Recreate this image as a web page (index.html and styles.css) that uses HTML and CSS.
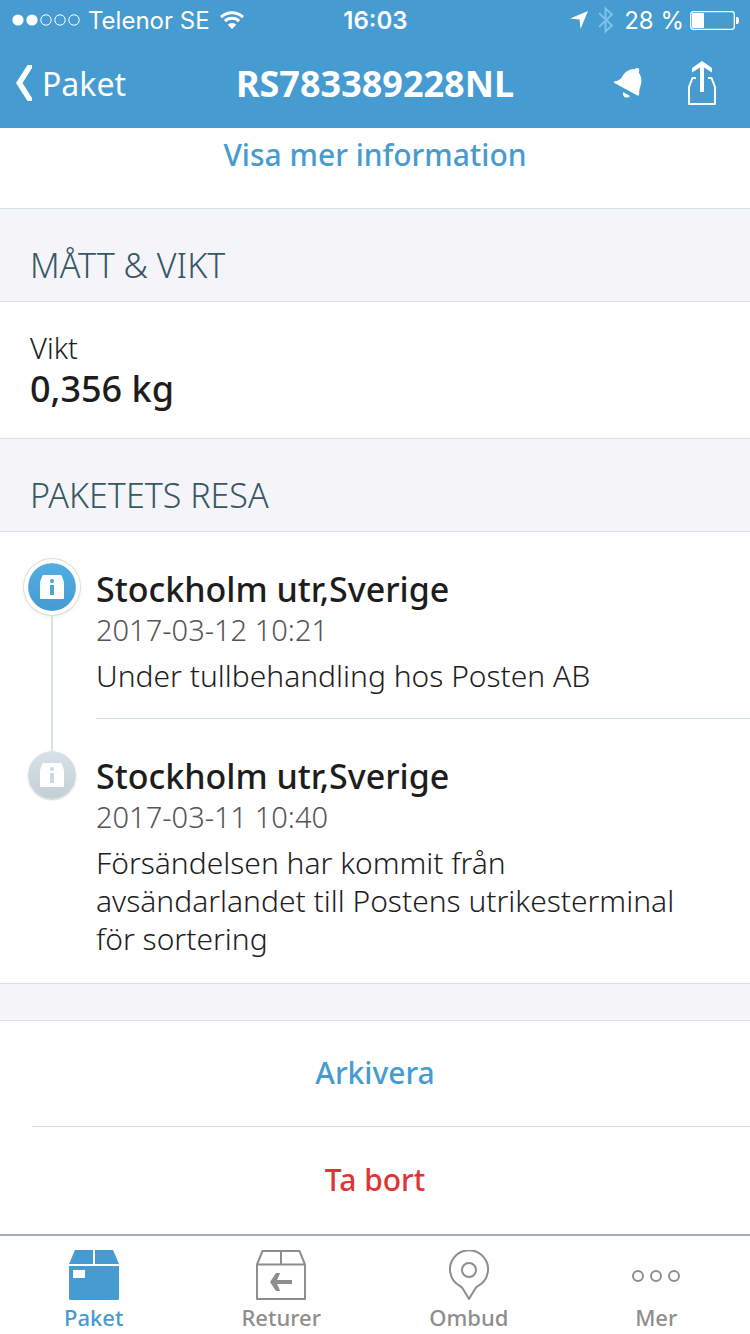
FILE: index.html
```html
<!DOCTYPE html>
<html lang="sv">
<head>
<meta charset="utf-8">
<meta name="viewport" content="width=device-width, initial-scale=1">
<title>RS783389228NL</title>
<link rel="stylesheet" href="styles.css">
</head>
<body>
<div class="app">
  <header class="top">
    <div class="status">
      <div class="status-side">
        <svg class="signal" width="68" height="12" viewBox="0 0 68 12" aria-hidden="true">
          <g fill="#fff"><circle cx="6" cy="6" r="5.6"/><circle cx="20" cy="6" r="5.6"/></g>
          <g fill="none" stroke="#fff"><circle cx="34" cy="6" r="5.2"/><circle cx="48" cy="6" r="5.2"/><circle cx="62" cy="6" r="5.2"/></g>
        </svg>
        <span>Telenor SE</span>
        <svg class="wifi" width="24" height="18" viewBox="0 0 24 18" aria-hidden="true">
          <g fill="none" stroke="#fff" stroke-width="3"><path d="M1 6.200a16 16 0 0 1 22 0"/><path d="M4.900 10.200a10.300 10.300 0 0 1 14.200 0"/></g>
          <path d="M12 18l-4.300-4.300a6.200 6.200 0 0 1 8.600 0z" fill="#fff"/>
        </svg>
      </div>
      <time class="clock">16:03</time>
      <div class="status-side status-right">
        <svg width="18" height="18" viewBox="0 0 18 18" aria-hidden="true"><path d="M18 0L10.500 18 9.500 8.500 0 7.500z" fill="#fff"/></svg>
        <svg class="bluetooth" width="16" height="28" viewBox="0 0 16 28" aria-hidden="true"><path d="M1 7l13 12.500-6.500 6V2.500l6.500 6L1 21" fill="none" stroke="#7cc3e8" stroke-width="2"/></svg>
        <span>28 %</span>
        <svg class="battery" width="49" height="19" viewBox="0 0 49 19" aria-hidden="true">
          <rect x=".7" y=".7" width="43.600" height="17.600" rx="2.500" fill="none" stroke="#fff" stroke-width="1.300"/>
          <rect x="2" y="2" width="12" height="15" rx="1" fill="#fff"/><path d="M46 6h1q2 0 2 3.500t-2 3.500h-1z" fill="#fff"/>
        </svg>
      </div>
    </div>
    <nav class="nav">
      <button class="back" type="button">
        <svg width="16" height="36" viewBox="0 0 16 36" aria-hidden="true"><path d="M11.500 0H16v3L6.500 18 16 33v3h-4.500L0 18z" fill="#fff"/></svg>
        <span>Paket</span>
      </button>
      <h1 class="title">RS783389228NL</h1>
      <div class="actions">
        <button class="icon-button" type="button" aria-label="Aviseringar">
          <svg width="28" height="30" viewBox="0 0 28 30" aria-hidden="true"><path d="M0 13.500C4 13 6.500 11.500 8 9c2.500-5 6.500-8 13-8 .5-1.300 3.500-1.300 4 0 .4 1 .3 2.500-.3 3.500C28 9 28 14 26.500 18c-1.200 3.500-1.500 6-1.200 8l-1 2L0 14.800z" fill="#fff"/><path d="M9 24l7 4c-1.500 2.500-7 2.300-7-2z" fill="#fff"/></svg>
        </button>
        <button class="icon-button" type="button" aria-label="Dela">
          <svg width="28" height="44" viewBox="0 0 28 44" aria-hidden="true"><path d="M8 17H4.500L1 26v17h26V26l-3.500-9H20" fill="none" stroke="#fff" stroke-width="2" stroke-linejoin="round"/><path d="M14 0l10 7v4.500l-8-5V31h-4V6.500l-8 5V7z" fill="#fff"/></svg>
        </button>
      </div>
    </nav>
  </header>

  <main class="content">
    <button class="action more" type="button">Visa mer information</button>

    <h2 class="group-title">MÅTT &amp; VIKT</h2>
    <dl class="weight">
      <dt>Vikt</dt>
      <dd>0,356 kg</dd>
    </dl>

    <h2 class="group-title">PAKETETS RESA</h2>
    <ol class="journey">
      <li class="event">
        <div class="marker">
          <svg class="badge badge-current" width="48" height="48" viewBox="0 0 48 48" aria-hidden="true">
            <defs><linearGradient id="blue" x2="0" y2="1"><stop stop-color="#52aee3"/><stop offset="1" stop-color="#469bd1"/></linearGradient></defs>
            <circle cx="24" cy="24" r="24" fill="url(#blue)"/>
            <path d="M15.500 12h17q1 0 1.300 1l2.200 6v16q0 1-1 1H13q-1 0-1-1V19l2.200-6q.3-1 1.300-1z" fill="#fff"/>
            <g fill="#4aa3d9"><circle cx="24" cy="18" r="2"/><path d="M22 22h4v10h-4z"/></g>
          </svg>
        </div>
        <div class="event-body">
          <h3>Stockholm utr,Sverige</h3>
          <time>2017-03-12 10:21</time>
          <p>Under tullbehandling hos Posten AB</p>
        </div>
      </li>
      <li class="event">
        <div class="marker">
          <svg class="badge badge-past" width="48" height="48" viewBox="0 0 48 48" aria-hidden="true">
            <defs><linearGradient id="grey" x2="0" y2="1"><stop stop-color="#d6e2e7"/><stop offset="1" stop-color="#c3cfd5"/></linearGradient></defs>
            <circle cx="24" cy="24" r="24" fill="url(#grey)"/>
            <path d="M15.500 12h17q1 0 1.300 1l2.200 6v16q0 1-1 1H13q-1 0-1-1V19l2.200-6q.3-1 1.300-1z" fill="#fff"/>
            <g fill="#ccd8dd"><circle cx="24" cy="18" r="2"/><path d="M22 22h4v10h-4z"/></g>
          </svg>
        </div>
        <div class="event-body">
          <h3>Stockholm utr,Sverige</h3>
          <time>2017-03-11 10:40</time>
          <p>Försändelsen har kommit från avsändarlandet till Postens utrikesterminal för sortering</p>
        </div>
      </li>
    </ol>

    <div class="actions-list">
      <button class="action" type="button">Arkivera</button>
      <button class="action danger" type="button">Ta bort</button>
    </div>
  </main>

  <nav class="tabs">
    <a class="tab active" href="#paket" aria-current="page">
      <svg width="50" height="50" viewBox="0 0 50 50" aria-hidden="true"><g fill="currentColor"><path d="M6 0h18v14H0zM26 0h18l6 14H26z"/><path d="M0 16h50v33l-1 1H1l-1-1z"/></g><path d="M4 20h12v8H4z" fill="#fff"/></svg>
      <span>Paket</span>
    </a>
    <a class="tab" href="#returer">
      <svg width="50" height="50" viewBox="0 0 50 50" aria-hidden="true"><path d="M1 14.500V49h48V14.500L43.500 1h-37L1 14.500h48M25 1v13" fill="none" stroke="currentColor" stroke-width="2" stroke-linejoin="round"/><path d="M14 32l6-9h4l-1 3-2 4h15v4H21l2 4 1 3h-4z" fill="currentColor"/></svg>
      <span>Returer</span>
    </a>
    <a class="tab" href="#ombud">
      <svg width="40" height="50" viewBox="0 0 40 50" aria-hidden="true"><g fill="none" stroke="currentColor" stroke-width="2" stroke-linejoin="round"><path d="M20 49l-6-10q-1-2-3-3a19 19 0 1 1 18 0q-2 1-3 3z"/><circle cx="20" cy="20" r="7"/></g></svg>
      <span>Ombud</span>
    </a>
    <a class="tab" href="#mer">
      <svg width="48" height="50" viewBox="0 0 48 50" aria-hidden="true"><g fill="none" stroke="currentColor" stroke-width="2"><circle cx="6" cy="26" r="5"/><circle cx="24" cy="26" r="5"/><circle cx="42" cy="26" r="5"/></g></svg>
      <span>Mer</span>
    </a>
  </nav>
</div>
</body>
</html>
```
FILE: styles.css
```css
:root {
  --blue: #469bd1;
  --line: #d7e2e7;
  --ink: #1d1d1d;
  --panel: #f4f4f9;
  --grey: #8e8e8e;
}

* { box-sizing: border-box; }

body {
  margin: 0;
  background: #fff;
  color: var(--ink);
  font-family: "Noto Sans", sans-serif;
  font-size: 30px;
}

h1, h2, h3, p, dl, dd, ol { margin: 0; padding: 0; }
ol { list-style: none; }
svg { display: block; flex: none; }

button {
  margin: 0;
  padding: 0;
  border: 0;
  background: none;
  color: inherit;
  font: inherit;
}

.app {
  display: flex;
  flex-direction: column;
  min-height: 100vh;
}

.top { background: var(--blue); color: #fff; }

.status {
  display: grid;
  grid-template-columns: 1fr auto 1fr;
  align-items: center;
  height: 40px;
  padding: 0 11px 0 12px;
  font-family: Inter, sans-serif;
  font-size: 24px;
}
.status-side { display: flex; align-items: center; gap: 10px; white-space: nowrap; }
.signal { margin-right: -2px; }
.battery { margin-left: -4px; }
.status-right { justify-content: flex-end; }
.clock { font-weight: 600; }

.nav {
  display: grid;
  grid-template-columns: 1fr auto 1fr;
  align-items: center;
  height: 88px;
  padding: 0 34px 2px;
}
.back { display: flex; align-items: center; gap: 10px; margin-left: -18px; font-size: 32px; }
.title { font-size: 36px; font-weight: 700; }
.actions { display: flex; justify-content: flex-end; align-items: center; gap: 46px; }

.content { flex: 1; }

.action {
  display: block;
  width: 100%;
  padding: 32px 0;
  color: var(--blue);
  font-size: 30px;
  font-weight: 500;
  line-height: 42px;
  text-align: center;
}
.more { padding: 6px 0 32px; }
.danger { color: #dc3535; }

.group-title {
  padding: 36px 30px 16px;
  border-top: 1px solid var(--line);
  border-bottom: 1px solid var(--line);
  background: var(--panel);
  color: #365764;
  font-size: 34px;
  font-weight: 300;
  line-height: 40px;
}

.weight { padding: 28px 30px 26px; }
.weight dt { font-size: 29px; font-weight: 300; line-height: 36px; }
.weight dd { font-size: 36px; font-weight: 500; line-height: 46px; }

.event { display: flex; }
.marker {
  display: flex;
  flex-direction: column;
  width: 48px;
  margin: 0 20px 0 28px;
}
.badge { border-radius: 50%; }
.badge-current { margin-top: 31px; box-shadow: 0 0 0 4px #fff, 0 0 0 5px #dcdcdc, 0 2px 8px #0003; }
.badge-past { margin-top: 32px; box-shadow: 0 1px 2px #0003; }
.event:not(:last-child) .marker::after {
  content: "";
  flex: 1;
  width: 2px;
  margin: 5px auto -32px;
  background: var(--line);
}
.event-body { flex: 1; padding: 34px 60px 23px 0; }
.event:not(:last-child) .event-body { border-bottom: 1px solid var(--line); }
.event:last-child .event-body { padding-bottom: 26px; }
.event h3 { font-size: 34px; font-weight: 500; line-height: 46px; }
.event time { display: block; color: #555; font-size: 29px; font-weight: 300; line-height: 36px; }
.event p { margin-top: 9px; font-size: 30px; font-weight: 300; line-height: 38px; }

.actions-list {
  border-top: 36px solid var(--panel);
  box-shadow: inset 0 1px var(--line), 0 -1px var(--line);
}
.actions-list .danger {
  width: auto;
  min-width: calc(100% - 32px);
  margin-left: 32px;
  padding-right: 32px;
  border-top: 1px solid var(--line);
}

.tabs {
  display: grid;
  grid-template-columns: repeat(4, 1fr);
  border-top: 2px solid #a5b0b5;
  background: #fff;
}
.tab {
  display: flex;
  flex-direction: column;
  align-items: center;
  padding: 14px 0 0;
  color: var(--grey);
  font-size: 22px;
  font-weight: 500;
  line-height: 34px;
  text-decoration: none;
}
.tab.active { color: var(--blue); }
```
